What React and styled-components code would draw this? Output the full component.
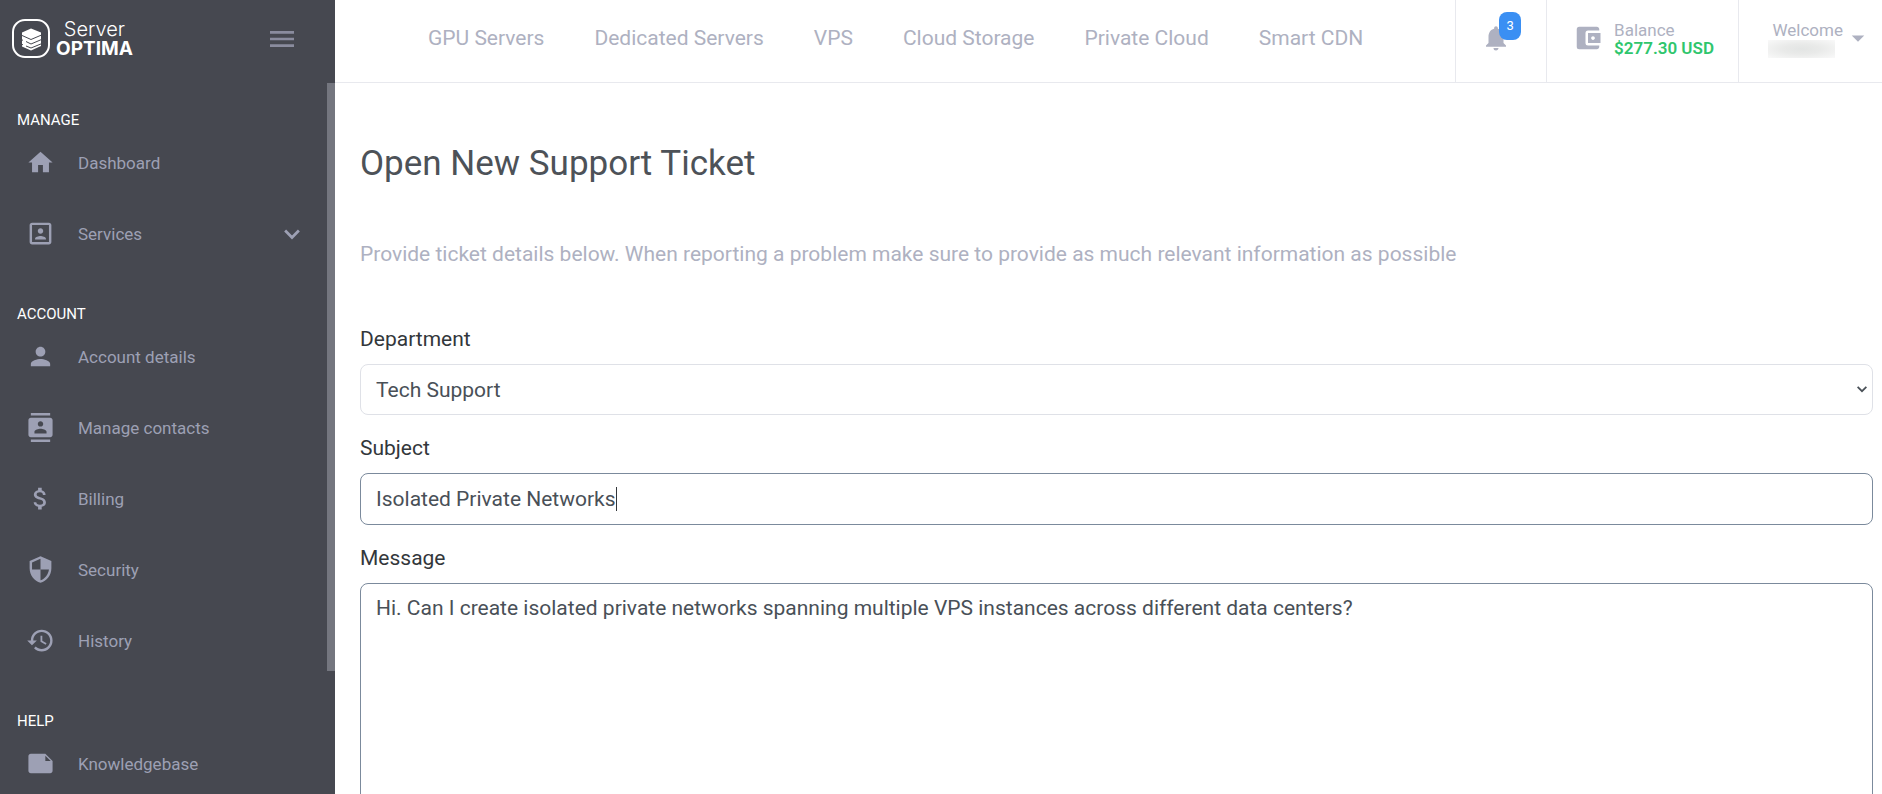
import React, { useState } from "react";
import styled, { createGlobalStyle } from "styled-components";
import {
    MdHome, MdPortrait, MdPerson, MdContacts, MdAttachMoney, MdSecurity, MdHistory,
    MdMenu, MdNotifications, MdAccountBalanceWallet, MdArrowDropDown,
} from "react-icons/md";

const GlobalStyle = createGlobalStyle`
    * { box-sizing: border-box; }
    body {
        margin: 0;
        background: #ffffff;
        font-family: Roboto, "Liberation Sans", sans-serif;
    }
    button, input, select, textarea { font-family: inherit; }
`;

// page frame
const Page = styled.div`
    display: flex;
    height: 100vh;
    overflow: hidden;
`;
const Content = styled.div`
    flex: 1;
    min-width: 0;
    display: flex;
    flex-direction: column;
`;

// sidebar
const Sidebar = styled.aside`
    width: 335px;
    flex-shrink: 0;
    display: flex;
    flex-direction: column;
    background: #464850;
`;
const SidebarHead = styled.div`
    height: 83px;
    flex-shrink: 0;
    display: flex;
    align-items: flex-start;
    justify-content: space-between;
    padding: 19px 33px 0 12px;
`;
const Brand = styled.a`
    display: flex;
    gap: 6px;
    color: #ffffff;
    text-decoration: none;
`;
const BrandText = styled.span`
    display: flex;
    flex-direction: column;
    align-items: center;
    font-family: Inter, "Liberation Sans", sans-serif;
    font-size: 20px;
    line-height: 20px;
    font-weight: 300;
`;
const BrandStrong = styled.strong`
    font-size: 19px;
    line-height: 20px;
    font-weight: 700;
`;
const IconButton = styled.button`
    display: flex;
    padding: 4px;
    border: 0;
    background: none;
    color: #8a8c9e;
    font-size: 32px;
    cursor: pointer;
`;
const SidebarBody = styled.div`
    flex: 1;
    min-height: 0;
    display: flex;
    overflow: hidden;
`;
const Menu = styled.nav`
    flex: 1;
    padding-top: 30px;
`;
const ScrollThumb = styled.div`
    width: 8px;
    height: 588px;
    background: #74767f;
`;
const Section = styled.section`
    & + & {
        padding-top: 38px;
    }
`;
const SectionTitle = styled.h2`
    margin: 0;
    padding-left: 17px;
    color: #ffffff;
    font-size: 15px;
    line-height: 14px;
    font-weight: 400;
`;
const MenuList = styled.ul`
    margin: 0;
    padding: 0;
    list-style: none;
`;
const MenuLink = styled.a`
    display: flex;
    align-items: center;
    height: 71px;
    padding: 0 24px 0 26px;
    color: #9da0b4;
    font-size: 17px;
    text-decoration: none;

    svg {
        flex-shrink: 0;
        font-size: 29px;
    }
`;
const MenuText = styled.span`
    flex: 1;
    padding-left: 23px;
`;

// top bar
const Header = styled.header`
    height: 83px;
    flex-shrink: 0;
    display: flex;
    border-bottom: 1px solid #e8e9ee;
    color: #aeb1c1;
`;
const TopNav = styled.nav`
    flex: 1;
    display: flex;
    align-items: flex-start;
    gap: 50px;
    padding: 23px 0 0 93px;
`;
const TopLink = styled.a`
    color: inherit;
    font-size: 21px;
    line-height: 30px;
    white-space: nowrap;
    text-decoration: none;
`;
const HeaderCell = styled.button`
    display: flex;
    align-items: flex-start;
    gap: ${(props) => props.$gap || 0}px;
    padding: ${(props) => props.$pad};
    border: 0;
    border-left: 1px solid #e8e9ee;
    background: none;
    color: inherit;
    font-size: 17px;
    line-height: 18px;
    text-align: left;
    cursor: pointer;

    svg {
        flex-shrink: 0;
        font-size: 30px;
    }
`;
const BellWrap = styled.span`
    position: relative;
    display: flex;
`;
const Badge = styled.span`
    position: absolute;
    left: 18px;
    top: -11px;
    width: 22px;
    height: 28px;
    border-radius: 8px;
    background: #3a8ff3;
    color: #ffffff;
    font-size: 13px;
    line-height: 27px;
    text-align: center;
`;
const CellText = styled.span`
    display: flex;
    flex-direction: column;
    align-items: ${(props) => (props.$end ? "flex-end" : "flex-start")};
`;
const Amount = styled.strong`
    color: #2fc66d;
    font-weight: 600;
`;
const HiddenName = styled.span`
    width: 67px;
    height: 18px;
    margin: 1px 8px 0 0;
    background: radial-gradient(ellipse at center, #e3e5e4 0%, #e9eae9 40%, #f9f9f9 100%);
`;
const WalletIcon = styled(MdAccountBalanceWallet)`
    margin-top: 2px;
`;
const CaretIcon = styled(MdArrowDropDown)`
    margin-top: 2px;
`;

// ticket form
const Main = styled.main`
    flex: 1;
    min-height: 0;
    overflow-y: auto;
    scrollbar-width: none;
    padding: 60px 9px 0 25px;
`;
const Title = styled.h1`
    margin: 0 0 53px;
    color: #4d5258;
    font-size: 35px;
    line-height: 42px;
    font-weight: 400;
`;
const Lead = styled.p`
    margin: 0 0 54px;
    color: #aeb1c1;
    font-size: 21px;
    line-height: 32px;
`;
const Form = styled.form`
    display: flex;
    flex-direction: column;
    gap: 18px;
`;
const Field = styled.div`
    display: flex;
    flex-direction: column;
    gap: 10px;
`;
const Label = styled.label`
    color: #33373b;
    font-size: 21px;
    line-height: 30px;
`;
const SelectBox = styled.div`
    position: relative;
    display: flex;

    svg {
        position: absolute;
        right: 4px;
        top: 18px;
        color: #495057;
        pointer-events: none;
    }
`;
const Select = styled.select`
    appearance: none;
    width: 100%;
    height: 51px;
    padding: 0 24px 0 15px;
    border: 1px solid #dfe1e7;
    border-radius: 8px;
    background: #ffffff;
    color: #495057;
    font-size: 21px;
`;
const InputBox = styled.div`
    display: flex;
    align-items: center;
    height: 52px;
    padding: 0 15px;
    border: 1px solid #7b8a9c;
    border-radius: 8px;
`;
const Input = styled.input`
    field-sizing: content;
    max-width: 100%;
    padding: 0;
    border: 0;
    outline: 0;
    background: none;
    caret-color: transparent;
    color: #495057;
    font-size: 21px;
    line-height: 30px;
`;
const TextCaret = styled.span`
    width: 1px;
    height: 24px;
    background: #33373b;
`;
const Textarea = styled.textarea`
    padding: 9px 15px;
    border: 1px solid #7b8a9c;
    border-radius: 8px;
    outline: 0;
    resize: vertical;
    color: #495057;
    font-size: 21px;
    line-height: 30px;
`;

function NoteIcon() {
    return (
        <svg viewBox="0 0 24 24" width="1em" height="1em" fill="currentColor">
            <path d="M16 10V5.500L20.500 10H16M22 10L16 4H4C2.900 4 2 4.900 2 6V18C2 19.100 2.900 20 4 20H20C21.100 20 22 19.100 22 18V10Z" fillRule="evenodd" />
        </svg>
    );
}

function ChevronIcon({ size, weight }) {
    return (
        <svg viewBox="0 0 16 16" width={size} height={size} fill="none" stroke="currentColor" strokeWidth={weight}>
            <path d="M3 5.500L8 10.500L13 5.500" />
        </svg>
    );
}

// rounded frame with a stack of four servers
function LogoMark() {
    return (
        <svg width="38" height="39" viewBox="0 0 38 39">
            <rect x="1" y="1" width="36" height="37" rx="12" fill="none" stroke="#fff" strokeWidth="2" />
            <path d="M19 9.500L29 13.500V27L19 31.500L10 27.500V13.500Z" fill="#fff" />
            <g fill="none" stroke="#464850" strokeWidth="1">
                <path d="M9 16L19 20.500L30 15.800" />
                <path d="M9 20.500L11 21.300M14 22.500L19 25L30 20.300" />
                <path d="M9 25L11 25.800M14 27L19 29L30 24.500" />
            </g>
        </svg>
    );
}

const sections = [
    {
        title: "MANAGE",
        items: [
            { text: "Dashboard", icon: MdHome },
            { text: "Services", icon: MdPortrait, more: true },
        ],
    },
    {
        title: "ACCOUNT",
        items: [
            { text: "Account details", icon: MdPerson },
            { text: "Manage contacts", icon: MdContacts },
            { text: "Billing", icon: MdAttachMoney },
            { text: "Security", icon: MdSecurity },
            { text: "History", icon: MdHistory },
        ],
    },
    {
        title: "HELP",
        items: [{ text: "Knowledgebase", icon: NoteIcon }],
    },
];

const topLinks = ["GPU Servers", "Dedicated Servers", "VPS", "Cloud Storage", "Private Cloud", "Smart CDN"];

function SideMenu() {
    return (
        <Sidebar>
            <SidebarHead>
                <Brand href="#">
                    <LogoMark />
                    <BrandText>
                        Server
                        <BrandStrong>OPTIMA</BrandStrong>
                    </BrandText>
                </Brand>
                <IconButton type="button" aria-label="Toggle menu">
                    <MdMenu />
                </IconButton>
            </SidebarHead>
            <SidebarBody>
                <Menu>
                    {sections.map((section) => (
                        <Section key={section.title}>
                            <SectionTitle>{section.title}</SectionTitle>
                            <MenuList>
                                {section.items.map((item) => (
                                    <li key={item.text}>
                                        <MenuLink href="#">
                                            <item.icon />
                                            <MenuText>{item.text}</MenuText>
                                            {item.more && <ChevronIcon size={22} weight={2} />}
                                        </MenuLink>
                                    </li>
                                ))}
                            </MenuList>
                        </Section>
                    ))}
                </Menu>
                <ScrollThumb />
            </SidebarBody>
        </Sidebar>
    );
}

function TopBar() {
    return (
        <Header>
            <TopNav>
                {topLinks.map((text) => (
                    <TopLink href="#" key={text}>{text}</TopLink>
                ))}
            </TopNav>
            <HeaderCell type="button" aria-label="Notifications" $pad="23px 35px 0 25px">
                <BellWrap>
                    <MdNotifications />
                    <Badge>3</Badge>
                </BellWrap>
            </HeaderCell>
            <HeaderCell type="button" $gap={11} $pad="21px 24px 0 26px">
                <WalletIcon />
                <CellText>
                    Balance
                    <Amount>$277.30 USD</Amount>
                </CellText>
            </HeaderCell>
            <HeaderCell type="button" $pad="21px 9px 0 29px">
                <CellText $end>
                    Welcome
                    <HiddenName />
                </CellText>
                <CaretIcon />
            </HeaderCell>
        </Header>
    );
}

function TicketForm() {
    const [subject, setSubject] = useState("Isolated Private Networks");
    const [message, setMessage] = useState(
        "Hi. Can I create isolated private networks spanning multiple VPS instances across different data centers?"
    );

    return (
        <Form>
            <Field>
                <Label htmlFor="department">Department</Label>
                <SelectBox>
                    <Select id="department" defaultValue="tech">
                        <option value="tech">Tech Support</option>
                    </Select>
                    <ChevronIcon size={14} weight={2} />
                </SelectBox>
            </Field>
            <Field>
                <Label htmlFor="subject">Subject</Label>
                <InputBox>
                    <Input id="subject" type="text" value={subject} onChange={(event) => setSubject(event.target.value)} />
                    <TextCaret />
                </InputBox>
            </Field>
            <Field>
                <Label htmlFor="message">Message</Label>
                <Textarea id="message" rows={12} value={message} onChange={(event) => setMessage(event.target.value)} />
            </Field>
        </Form>
    );
}

function App() {
    return (
        <>
            <GlobalStyle />
            <Page>
                <SideMenu />
                <Content>
                    <TopBar />
                    <Main>
                        <Title>Open New Support Ticket</Title>
                        <Lead>
                            Provide ticket details below. When reporting a problem make sure to provide as much relevant information as possible
                        </Lead>
                        <TicketForm />
                    </Main>
                </Content>
            </Page>
        </>
    );
}

export default App;
